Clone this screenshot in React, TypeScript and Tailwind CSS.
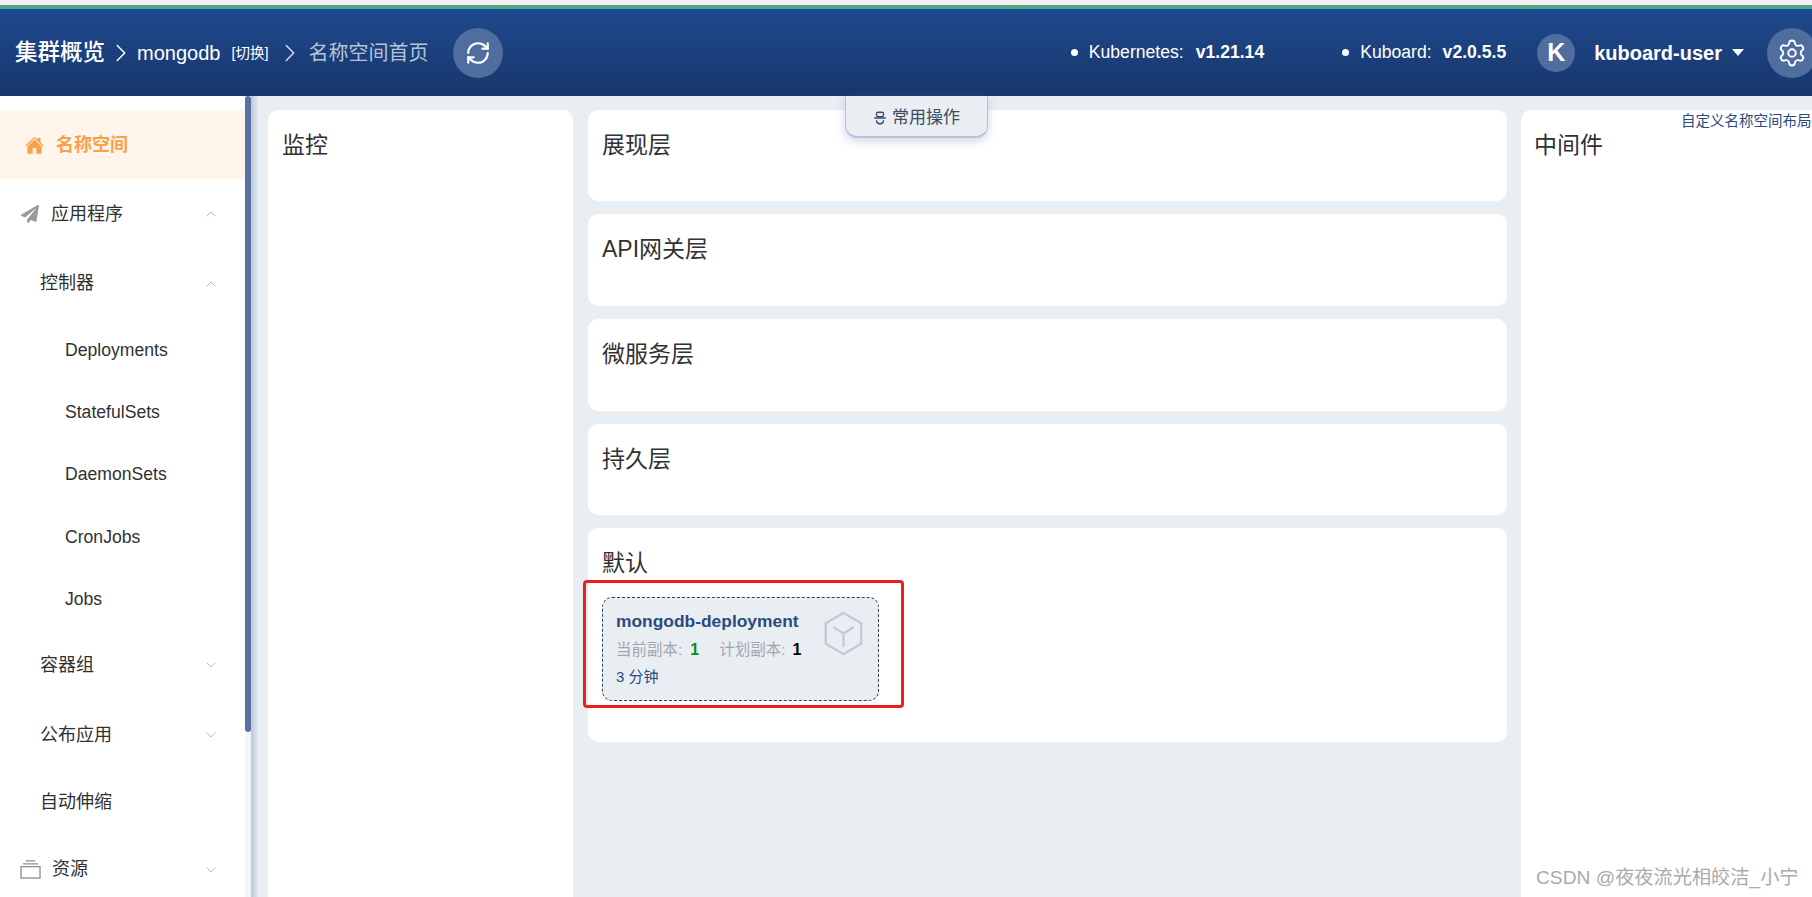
import { ChevronDown, ChevronRight, ChevronUp, RefreshCw, Settings } from "lucide-react"
import { FaPaperPlane } from "react-icons/fa"
import { IoHome } from "react-icons/io5"

const cjk = "font-['Liberation_Sans','Noto_Sans_CJK_SC',sans-serif]"

function NavRow({ label, height, indent, icon, chevron }: { label: string; height: string; indent: string; icon?: React.ReactNode; chevron?: "up" | "down" }) {
  return (
    <div className={`flex items-center pt-[1px] text-[18px] text-[#303133] ${height} ${indent}`}>
      {icon}
      <span>{label}</span>
      {chevron === "up" && <ChevronUp className="ml-auto mr-[26px] w-[16px] h-[16px] text-[#a8abb2]" strokeWidth={1.25} />}
      {chevron === "down" && <ChevronDown className="ml-auto mr-[26px] w-[16px] h-[16px] text-[#a8abb2]" strokeWidth={1.25} />}
    </div>
  )
}

function Sidebar() {
  return (
    <div className="w-[245px] shrink-0 bg-white pt-[14px] overflow-hidden">
      <div className="flex items-center h-[69px] pt-[1px] pl-[25px] bg-[#fff5ea] text-[#f8a04b] font-bold text-[18px]">
        <IoHome className="w-[19px] h-[19px] mr-[12px]" />
        <span>名称空间</span>
      </div>
      <NavRow
        label="应用程序"
        height="h-[69px]"
        indent="pl-[21px]"
        chevron="up"
        icon={<FaPaperPlane className="w-[18px] h-[18px] mr-[12px] text-[#9a9a9a]" />}
      />
      <NavRow label="控制器" height="h-[70px]" indent="pl-[40px]" chevron="up" />
      {["Deployments", "StatefulSets", "DaemonSets", "CronJobs", "Jobs"].map((name) => (
        <div key={name} className="flex items-center h-[62.4px] pl-[65px] pt-[1px] text-[17.6px] text-[#303133]">
          {name}
        </div>
      ))}
      <NavRow label="容器组" height="h-[70px]" indent="pl-[40px]" chevron="down" />
      <NavRow label="公布应用" height="h-[70px]" indent="pl-[40px]" chevron="down" />
      <NavRow label="自动伸缩" height="h-[65px]" indent="pl-[40px]" />
      <NavRow
        label="资源"
        height="h-[69px]"
        indent="pl-[20px]"
        chevron="down"
        icon={
          <svg viewBox="0 0 22 20" className="w-[21px] h-[19px] mr-[11px] text-[#8f8f8f]" fill="none" stroke="currentColor" strokeWidth="1.4">
            <rect x="1" y="7" width="20" height="12" />
            <path d="M3 4h16M6 1h10" />
          </svg>
        }
      />
    </div>
  )
}

function Panel({ title, className, children }: { title: string; className: string; children?: React.ReactNode }) {
  return (
    <div className={`bg-white rounded-[10px] px-[14px] pt-[20px] ${className}`}>
      <div className="text-[23px] leading-[30px] text-[#303133]">{title}</div>
      {children}
    </div>
  )
}

function DeploymentCard() {
  return (
    <div className="relative mt-[19px] w-[277px] h-[104px] bg-[#e9eef3] border border-dashed border-[#2d3f63] rounded-[10px] pl-[13px] pt-[12px]">
      <div className="text-[17.4px] leading-[22px] font-bold text-[#2b4a7f]">mongodb-deployment</div>
      <div className="flex items-center mt-[8px] text-[15.5px] leading-[20px] text-[#a3a6ad]">
        <span>当前副本:</span>
        <span className="ml-[8px] font-bold text-[#0a8a1a] text-[16px]">1</span>
        <span className="ml-[20px]">计划副本:</span>
        <span className="ml-[7px] font-bold text-black text-[16px]">1</span>
      </div>
      <div className="mt-[7px] text-[15px] leading-[20px] text-[#2b4a7f]">3 分钟</div>
      <svg viewBox="0 0 44 48" className="absolute right-[14px] top-[13px] w-[41px] h-[45px] text-[#c3cad8]" fill="none" stroke="currentColor" strokeWidth="2.6">
        <path d="M22 2 41 13v22L22 46 3 35V13z" />
        <path d="M22 24V38M22 24 11 17M22 24l11-7" />
      </svg>
    </div>
  )
}

export default function App() {
  return (
    <div className={`relative h-[897px] w-[1812px] overflow-hidden flex flex-col bg-[#e9eef3] ${cjk}`}>
      <div className="h-[5px] bg-[#f3f1f1]" />
      <div className="h-[4px] bg-[#4fa68e]" />
      <header className="h-[87px] shrink-0 flex items-center bg-gradient-to-b from-[#1f4a8e] to-[#18366c] text-white pl-[15px]">
        <span className="text-[22.5px] font-medium">集群概览</span>
        <ChevronRight className="ml-[1px] w-[30px] h-[30px]" strokeWidth={1.2} />
        <span className="ml-[1px] text-[20px]">mongodb</span>
        <span className="ml-[11px] mt-[3px] text-[14.5px]">[切换]</span>
        <ChevronRight className="ml-[7px] w-[30px] h-[30px] text-[#d7dde8]" strokeWidth={1.2} />
        <span className="ml-[3px] text-[20px] text-[#b9c3d6]">名称空间首页</span>
        <div className="ml-[25px] w-[50px] h-[50px] rounded-full bg-[#4f6d9e] flex items-center justify-center">
          <RefreshCw className="w-[26px] h-[26px]" strokeWidth={2} />
        </div>
        <div className="ml-auto mr-[-5px] flex items-center">
          <div className="flex items-center text-[17.6px]">
            <span className="w-[7px] h-[7px] rounded-full bg-white" />
            <span className="ml-[11px]">Kubernetes:</span>
            <span className="ml-[12px] font-bold">v1.21.14</span>
          </div>
          <div className="ml-[78px] flex items-center text-[17.6px]">
            <span className="w-[7px] h-[7px] rounded-full bg-white" />
            <span className="ml-[11px]">Kuboard:</span>
            <span className="ml-[11px] font-bold">v2.0.5.5</span>
          </div>
          <div className="ml-[31px] w-[38px] h-[38px] rounded-full bg-[#4f6d9e] flex items-center justify-center text-[25px] font-bold">K</div>
          <span className="ml-[19px] text-[20px] font-bold">kuboard-user</span>
          <span className="ml-[10px] w-0 h-0 border-x-[6px] border-x-transparent border-t-[7px] border-t-white" />
          <div className="ml-[23px] w-[50px] h-[50px] shrink-0 rounded-full bg-[#4f6d9e] flex items-center justify-center">
            <Settings className="w-[30px] h-[30px]" strokeWidth={1.5} />
          </div>
        </div>
      </header>

      <div className="flex flex-1 min-h-0">
        <Sidebar />
        <div className="w-[6px] shrink-0 bg-[#f3f6f9]">
          <div className="h-[636px] bg-[#5a73a3] rounded-b-[3px] rounded-t-[3px]" />
        </div>
        <main className="flex-1 min-w-0 flex items-start gap-[15px] pl-[17px] pt-[14px] bg-gradient-to-r from-[#b9c8dc] via-[#e9eef3] via-[8px] to-[#e9eef3]">
          <Panel title="监控" className="w-[305px] shrink-0 h-[830px]" />
          <div className="w-[919px] shrink-0 flex flex-col gap-[13px]">
            <Panel title="展现层" className="h-[91px]" />
            <Panel title="API网关层" className="h-[92px]" />
            <Panel title="微服务层" className="h-[92px]" />
            <Panel title="持久层" className="h-[91px]" />
            <Panel title="默认" className="h-[214px]">
              <DeploymentCard />
            </Panel>
          </div>
          <Panel title="中间件" className="w-[320px] shrink-0 h-[830px] -ml-[1px] pl-[13px]" />
        </main>
      </div>

      {/* floating tab under the header */}
      <div className="absolute left-[845px] top-[96px] w-[143px] h-[42px] pt-[3px] flex items-center justify-center gap-[5px] bg-[#e9eef3] text-[17px] text-[#3d4a63] rounded-b-[12px] border-x border-b-2 border-[#b9c0d8] shadow-[0_3px_10px_rgba(120,130,190,0.35)]">
        <svg viewBox="0 0 16 16" className="w-[14px] h-[14px]" fill="none" stroke="currentColor" strokeWidth="1.6">
          <rect x="4" y="1.5" width="8" height="5" rx="2" />
          <path d="M1.5 8h13M4 10.5c0 2.5 1.5 4 4 4s4-1.5 4-4" />
        </svg>
        <span>常用操作</span>
      </div>
      <div className="absolute left-[1681px] top-[111px] whitespace-nowrap text-[14.5px] text-[#2b4a7f]">自定义名称空间布局</div>
      {/* red annotation round the deployment card */}
      <div className="absolute left-[583px] top-[580px] w-[321px] h-[128px] border-[3px] border-[#f01c1c] rounded-[4px]" />
      <div className="absolute left-[1536px] top-[864px] whitespace-nowrap text-[19.2px] text-[#ababab]">CSDN @夜夜流光相皎洁_小宁</div>
    </div>
  )
}
